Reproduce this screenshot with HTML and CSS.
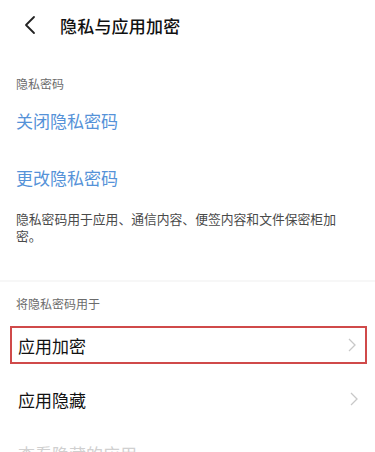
FILE: index.html
```html
<!DOCTYPE html>
<html lang="zh">
<head>
<meta charset="utf-8">
<link rel="stylesheet" href="styles.css">
</head>
<body>
<div class="page">
  <header class="topbar">
    <svg class="back" width="12" height="20" viewBox="0 0 12 20"><path d="M10 2 L2 10 L10 18" fill="none" stroke="#222" stroke-width="1.8" stroke-linecap="round" stroke-linejoin="round"/></svg>
    <h1 class="title">隐私与应用加密</h1>
  </header>
  <div class="section-label first">隐私密码</div>
  <div class="link-row">关闭隐私密码</div>
  <div class="link-row">更改隐私密码</div>
  <p class="desc">隐私密码用于应用、通信内容、便签内容和文件保密柜加密。</p>
  <div class="divider"></div>
  <div class="section-label">将隐私密码用于</div>
  <div class="item highlighted">
    <span class="item-text">应用加密</span>
    <svg class="chev" width="8" height="14" viewBox="0 0 8 14"><path d="M1 1 L7 7 L1 13" fill="none" stroke="#c8c8c8" stroke-width="1.3"/></svg>
  </div>
  <div class="item">
    <span class="item-text">应用隐藏</span>
    <svg class="chev" width="8" height="14" viewBox="0 0 8 14"><path d="M1 1 L7 7 L1 13" fill="none" stroke="#c8c8c8" stroke-width="1.3"/></svg>
  </div>
  <div class="item faded">
    <span class="item-text">查看隐藏的应用</span>
  </div>
</div>
</body>
</html>
```
FILE: styles.css
```css
html, body {
  margin: 0;
  padding: 0;
  background: #fff;
}
body {
  font-family: "Noto Sans CJK SC", "Noto Sans", sans-serif;
  color: #1a1a1a;
  width: 375px;
  height: 452px;
  overflow: hidden;
}
.page {
  display: flex;
  flex-direction: column;
}
.topbar {
  display: flex;
  align-items: center;
  height: 50px;
  padding-left: 24px;
}
.back {
  flex: none;
}
.title {
  margin: 0 0 0 24px;
  font-size: 17px;
  font-weight: 500;
  color: #111;
  letter-spacing: 0.2px;
}
.section-label {
  font-size: 12px;
  color: #6b6b6b;
  padding-left: 16px;
  line-height: 16px;
}
.section-label.first {
  margin-top: 26px;
}
.link-row {
  font-size: 17px;
  color: #5592d8;
  padding-left: 16px;
  line-height: 24px;
  margin-top: 17px;
}
.link-row + .link-row {
  margin-top: 33px;
}
.desc {
  margin: 20px 0 0;
  padding: 0 16px;
  font-size: 12.8px;
  line-height: 17px;
  color: #4a4a4a;
}
.divider {
  height: 2px;
  background: #f7f7f7;
  margin: 36px 0 14px;
}
.item {
  display: flex;
  align-items: center;
  justify-content: space-between;
  height: 38px;
  margin: 0 8px 0 10px;
  padding: 0 9px 0 8px;
  font-size: 17px;
  color: #111;
  box-sizing: border-box;
}
.highlighted {
  margin-top: 14px;
  border: 2.5px solid #d04a4a;
  padding-left: 6px;
}
.item + .item {
  margin-top: 16px;
}
.faded {
  color: #d0d0d0;
}
```
